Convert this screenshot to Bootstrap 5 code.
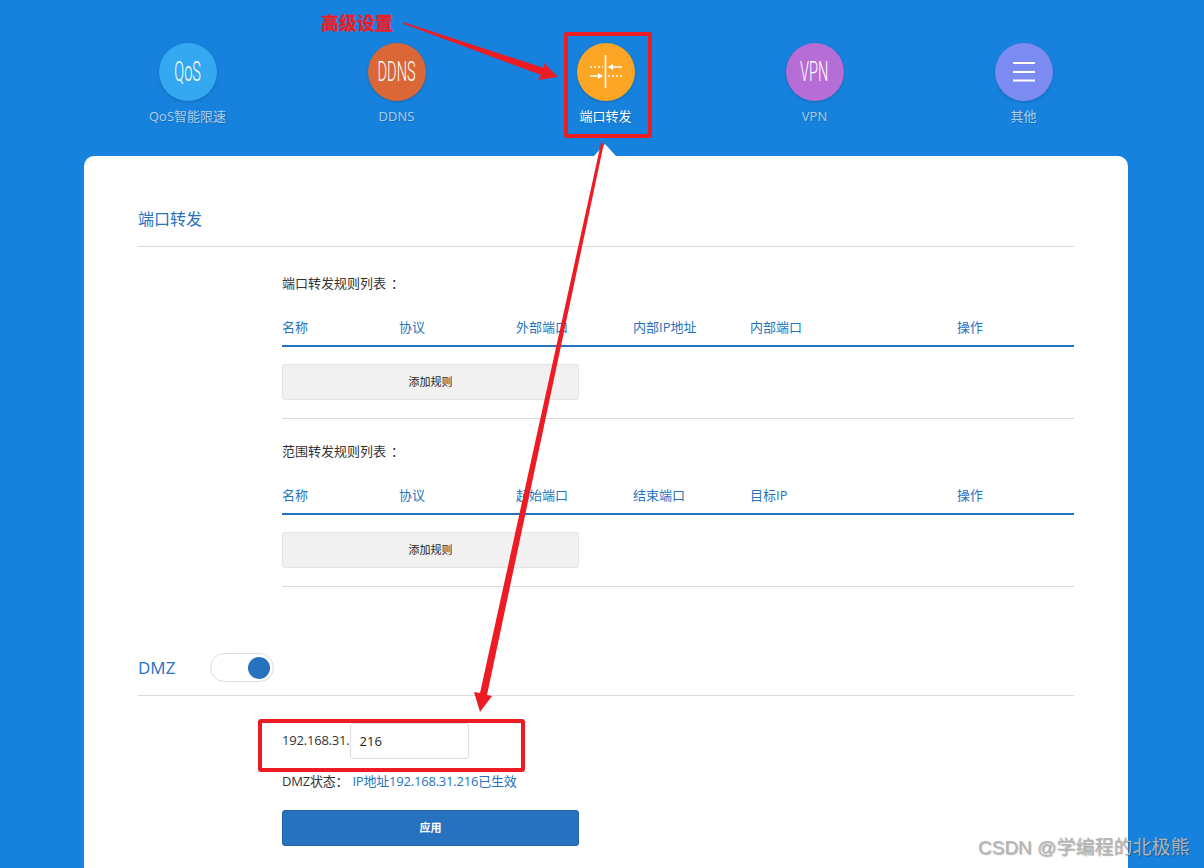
<!DOCTYPE html>
<html lang="zh-CN">
<head>
    <meta charset="UTF-8">
    <title>端口转发</title>
    <link href="https://cdn.jsdelivr.net/npm/bootstrap@5.3.0/dist/css/bootstrap.min.css" rel="stylesheet">
    <style>
        html, body { height: 868px; overflow: hidden; }
        body {
            background: #1782dd;
            color: #333;
            font-family: "Open Sans", "Noto Sans CJK SC", sans-serif;
            font-size: 13px;
            line-height: 20px;
        }
        .router-nav { width: 1045px; margin-left: 83px; padding-top: 43px; margin-bottom: 30px; }
        .router-item { width: 209px; color: rgba(255,255,255,.65); text-shadow: 1px 1px 1px rgba(0,0,0,.2); }
        .router-item.is-on { color: #fff; }
        .router-disc {
            width: 58px; height: 58px; border-radius: 50%;
            margin-bottom: 5px;
            box-shadow: 0 1px 3px rgba(0,0,0,.2);
            color: #fff; text-shadow: none;
        }
        .router-disc span {
            display: inline-block; flex-shrink: 0;
            font-family: "Roboto", sans-serif; font-weight: 300; font-size: 28px; line-height: 58px;
            transform: scaleX(.52);
        }
        .disc-qos { background: #34a9f2; }
        .disc-ddns { background: #da6735; }
        .disc-port { background: #fda625; }
        .disc-vpn { background: #b76dd6; }
        .disc-more { background: #7c8bf2; }
        .panel-box {
            width: 1044px; margin-left: 84px;
            padding: 51px 54px 40px;
            background: #fff;
            border-radius: 10px;
        }
        .panel-box::before {
            content: ""; position: absolute; left: 594px; top: 144px;
            border-left: 11px solid transparent; border-right: 11px solid transparent;
            border-bottom: 12px solid #fff;
        }
        .sec-title { color: #2672be; font-size: 16px; line-height: 24px; }
        .sec-dmz-name { font-size: 17px; line-height: 29px; }
        .sec-head { padding-bottom: 15px; border-bottom: 1px solid #d9d9d9; }
        .sec-dmz { margin-top: 66px; padding-bottom: 13px; border-bottom: 1px solid #d9d9d9; height: 43px; }
        .sec-body { margin-left: 144px; }
        .rule-head { margin-top: 23px; padding-bottom: 8px; border-bottom: 2px solid #2672be; color: #2672be; }
        .rule-head > div { width: 117px; }
        .rule-head > .col-wide { width: 207px; }
        .btn.add-btn, .btn.apply-btn {
            display: block; width: 297px; height: 36px; padding: 0;
            font-size: 11px; line-height: 34px; border-radius: 3px;
        }
        .btn.add-btn { margin-top: 17px; background: #f1f1f1; border: 1px solid #e3e3e3; color: #222; }
        .btn.apply-btn { margin-top: 18px; background: #2672be; border: 1px solid #1b62ab; color: #fff; font-weight: 700; }
        .rule-line { height: 1px; margin-top: 18px; background: #d9d9d9; }
        .block-one { margin-top: 26px; padding-bottom: 1px; }
        .block-two { margin-top: 22px; padding-bottom: 1px; }
        .colon-mark { margin-left: 5px; }
        .dmz-toggle {
            width: 64px; height: 29px; margin-left: 35px; padding: 3px 3px;
            border: 1px solid #ddd; border-radius: 15px; background: #fff;
        }
        .dmz-toggle i { display: block; width: 22px; height: 22px; border-radius: 50%; background: #2672be; }
        .dmz-row { margin-top: 27px; height: 36px; letter-spacing: -.2px; }
        .dmz-ip { line-height: 34px; }
        .form-control.dmz-input {
            width: 119px; height: 36px; padding: 0 9px; border-radius: 3px; border-color: #ddd;
            color: #222; font-size: 13px; letter-spacing: 0;
        }
        .dmz-state { margin-top: 12px; padding-bottom: 1px; letter-spacing: -.2px; }
        .dmz-state span { color: #2672be; margin-left: 4px; }
        .mark-layer { position: absolute; left: 0; top: 0; pointer-events: none; }
        .mark-label {
            position: absolute; left: 321px; top: 10px;
            color: #ed1c24; font-size: 18px; line-height: 24px; font-weight: 700;
            font-family: "Noto Sans CJK SC", sans-serif;
            -webkit-text-stroke: .3px #ed1c24;
        }
        .csdn-mark {
            position: absolute; left: 978px; top: 835px;
            color: #b4b4b4; font-size: 19px; line-height: 26px; white-space: nowrap;
            font-family: "Liberation Sans", "Noto Sans CJK SC", sans-serif;
            text-shadow: 1px 1px 1px rgba(0,0,0,.3);
        }
    </style>
</head>
<body>
<div class="d-flex router-nav">
    <div class="router-item d-flex flex-column align-items-center">
        <div class="router-disc disc-qos d-flex justify-content-center"><span>QoS</span></div>
        <div>QoS智能限速</div>
    </div>
    <div class="router-item d-flex flex-column align-items-center">
        <div class="router-disc disc-ddns d-flex justify-content-center"><span>DDNS</span></div>
        <div>DDNS</div>
    </div>
    <div class="router-item is-on d-flex flex-column align-items-center">
        <div class="router-disc disc-port">
            <svg width="58" height="58" viewBox="0 0 58 58" fill="none" stroke="#fff">
                <path d="M28.500 12v33" stroke-width="1.6"/>
                <path d="M13 24h13M31 33h14" stroke-width="1.4" stroke-dasharray="2 2"/>
                <path d="M45 24H33M13 33h12" stroke-width="1.6"/>
                <path d="M31 24l5-3v6zM26 33l-5-3v6z" fill="#fff" stroke="none"/>
            </svg>
        </div>
        <div>端口转发</div>
    </div>
    <div class="router-item d-flex flex-column align-items-center">
        <div class="router-disc disc-vpn d-flex justify-content-center"><span>VPN</span></div>
        <div>VPN</div>
    </div>
    <div class="router-item d-flex flex-column align-items-center">
        <div class="router-disc disc-more">
            <svg width="58" height="58" viewBox="0 0 58 58" stroke="#fff" stroke-width="1.8">
                <path d="M18 20h22M18 29h22M18 37.500h22"/>
            </svg>
        </div>
        <div>其他</div>
    </div>
</div>

<div class="panel-box">
    <div class="sec-head sec-title">端口转发</div>
    <div class="sec-body">
        <div class="block-one">端口转发规则列表<span class="colon-mark">：</span></div>
        <div class="rule-head d-flex">
            <div>名称</div><div>协议</div><div>外部端口</div><div>内部IP地址</div><div class="col-wide">内部端口</div><div>操作</div>
        </div>
        <button class="btn add-btn" type="button">添加规则</button>
        <div class="rule-line"></div>

        <div class="block-two">范围转发规则列表<span class="colon-mark">：</span></div>
        <div class="rule-head d-flex">
            <div>名称</div><div>协议</div><div>起始端口</div><div>结束端口</div><div class="col-wide">目标IP</div><div>操作</div>
        </div>
        <button class="btn add-btn" type="button">添加规则</button>
        <div class="rule-line"></div>
    </div>

    <div class="sec-dmz d-flex">
        <div class="sec-title sec-dmz-name">DMZ</div>
        <div class="dmz-toggle d-flex justify-content-end"><i></i></div>
    </div>
    <div class="sec-body">
        <div class="dmz-row d-flex">
            <div class="dmz-ip">192.168.31.</div>
            <input class="form-control dmz-input" type="text" value="216">
        </div>
        <div class="dmz-state">DMZ状态：<span>IP地址192.168.31.216已生效</span></div>
        <button class="btn apply-btn" type="button">应用</button>
    </div>
</div>

<svg class="mark-layer" width="1204" height="868" viewBox="0 0 1204 868" fill="#ed1c24">
    <rect x="566" y="34" width="84" height="102" rx="1" fill="none" stroke="#ed1c24" stroke-width="4"/>
    <rect x="260" y="721" width="263" height="49" rx="1" fill="none" stroke="#ed1c24" stroke-width="4"/>
    <polygon points="403,22 404,24 541,75 538,80 558,77 544,63 544,68"/>
    <polygon points="601,143 604,143 487,695 492,696 480,712 474,692 480,693"/>
</svg>
<div class="mark-label">高级设置</div>
<div class="csdn-mark">CSDN @学编程的北极熊</div>

<script src="https://cdn.jsdelivr.net/npm/bootstrap@5.3.0/dist/js/bootstrap.bundle.min.js"></script>
</body>
</html>
